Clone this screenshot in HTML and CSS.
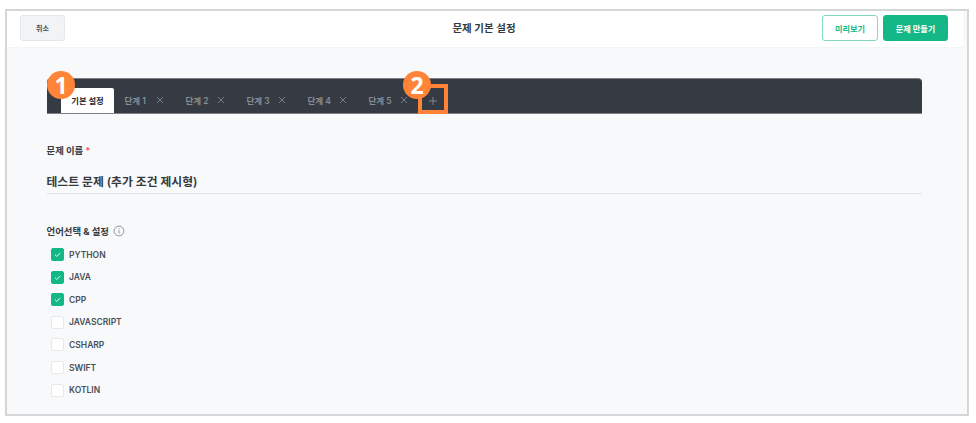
FILE: index.html
```
<!DOCTYPE html>
<html lang="ko">
<head>
    <meta charset="UTF-8">
    <meta name="viewport" content="width=device-width, initial-scale=1.0">
    <title>문제 기본 설정</title>
    <link rel="stylesheet" href="styles.css">
</head>
<body>

    <div class="frame">
        <header class="header">
            <div class="side"><button class="btn cancel">취소</button></div>
            <h1>문제 기본 설정</h1>
            <div class="side actions">
                <button class="btn preview">미리보기</button>
                <button class="btn create">문제 만들기</button>
            </div>
        </header>

        <main>
            <!-- Tabs -->
            <nav class="tabs">
                <div class="tab active">기본 설정<span class="marker">1</span></div>
                <div class="tab">단계 1<svg class="close" viewBox="0 0 8 8"><path d="M1 1l6 6M7 1l-6 6"/></svg></div>
                <div class="tab">단계 2<svg class="close" viewBox="0 0 8 8"><path d="M1 1l6 6M7 1l-6 6"/></svg></div>
                <div class="tab">단계 3<svg class="close" viewBox="0 0 8 8"><path d="M1 1l6 6M7 1l-6 6"/></svg></div>
                <div class="tab">단계 4<svg class="close" viewBox="0 0 8 8"><path d="M1 1l6 6M7 1l-6 6"/></svg></div>
                <div class="tab">단계 5<svg class="close" viewBox="0 0 8 8"><path d="M1 1l6 6M7 1l-6 6"/></svg></div>
                <div class="add">
                    <svg viewBox="0 0 8 8"><path d="M4 0v8M0 4h8"/></svg>
                    <span class="marker">2</span>
                </div>
            </nav>

            <!-- Problem name -->
            <section class="name">
                <h2>문제 이름<span class="required">*</span></h2>
                <div class="name-value">테스트 문제 (추가 조건 제시형)</div>
            </section>

            <!-- Languages -->
            <section class="languages">
                <h2>언어선택 &amp; 설정
                    <svg class="info" viewBox="0 0 12 12"><circle cx="6" cy="6" r="4.9"/><path d="M6 5.3v3.2M6 3.3v1"/></svg>
                </h2>
                <ul>
                    <li><span class="check on"><svg viewBox="0 0 12 12"><path d="M3.2 6.2l2 1.9 3.8-3.7"/></svg></span>PYTHON</li>
                    <li><span class="check on"><svg viewBox="0 0 12 12"><path d="M3.2 6.2l2 1.9 3.8-3.7"/></svg></span>JAVA</li>
                    <li><span class="check on"><svg viewBox="0 0 12 12"><path d="M3.2 6.2l2 1.9 3.8-3.7"/></svg></span>CPP</li>
                    <li><span class="check"></span>JAVASCRIPT</li>
                    <li><span class="check"></span>CSHARP</li>
                    <li><span class="check"></span>SWIFT</li>
                    <li><span class="check"></span>KOTLIN</li>
                </ul>
            </section>
        </main>
    </div>

</body>
</html>
```
FILE: styles.css
```
* {
    box-sizing: border-box;
}
body {
    margin: 0;
    padding: 9px 0 0 5px;
    background: #fff;
    color: #343a40;
    font-family: Inter, "Noto Sans CJK KR", sans-serif;
}
h1, h2, ul {
    margin: 0;
    padding: 0;
}
svg {
    display: block;
    fill: none;
    stroke: currentColor;
}
.frame {
    width: 964px;
    height: 407px;
    border: 2px solid #d5d6d8;
    background: #f8f9fb;
}
.header {
    display: flex;
    align-items: center;
    width: 956px;
    height: 37px;
    padding: 0 15px 2px 13px;
    background: #fff;
    border-bottom: 1px solid #f3f4f6;
}
.side {
    flex: 1;
    display: flex;
}
.actions {
    justify-content: flex-end;
    gap: 5px;
}
h1 {
    padding-top: 1px;
    font-size: 10.5px;
    font-weight: 600;
    line-height: 16px;
}
.btn {
    height: 26px;
    padding: 0 0 1px;
    border: 1px solid #14b886;
    border-radius: 3px;
    font-family: inherit;
    font-size: 8.2px;
    font-weight: bold;
}
.cancel {
    width: 45px;
    background: #f1f3f5;
    border-color: #e3e6ea;
    color: #495057;
    font-size: 7px;
}
.preview {
    width: 56px;
    background: #fff;
    border-color: #83d9bd;
    color: #14b886;
}
.create {
    width: 65px;
    background: #14b886;
    color: #fff;
}
main {
    padding: 30px 45px 0 39.5px;
}
.tabs {
    display: flex;
    align-items: flex-end;
    width: 875px;
    height: 36px;
    padding-left: 14.5px;
    background: #363a42;
    border: 1px solid #7d8085;
    border-width: 1px 0;
    border-radius: 4px 4px 0 0;
}
.tab {
    display: flex;
    align-items: center;
    justify-content: space-between;
    width: 61px;
    height: 25px;
    padding: 0 11px 1px 10.5px;
    color: #868e96;
    font-size: 8.5px;
    font-weight: 600;
}
.tab.active {
    position: relative;
    justify-content: center;
    width: 53px;
    padding: 0 0 1px;
    background: #fff;
    border-radius: 2px 2px 0 0;
    color: #212529;
    font-size: 8.3px;
    font-weight: bold;
}
.close {
    width: 8px;
    height: 8px;
    stroke-width: 0.8;
}
.add {
    position: relative;
    display: flex;
    align-items: center;
    justify-content: center;
    width: 30px;
    height: 30px;
    margin: 0 0 -1px -1px;
    padding-top: 3px;
    border: 4px solid #ff8438;
    color: #868e96;
}
.add svg {
    width: 8px;
    height: 8px;
    stroke-width: 0.9;
}
/* Numbered callouts */
.marker {
    position: absolute;
    top: -17px;
    left: -14px;
    width: 28px;
    height: 28px;
    border-radius: 50%;
    background: #ff8438;
    color: #fff;
    font: bold 23px/29px "Open Sans", sans-serif;
    text-align: center;
}
.add .marker {
    top: -17px;
    left: -19px;
}
h2 {
    display: flex;
    align-items: center;
    height: 16px;
    font-size: 9.4px;
    font-weight: bold;
}
.name {
    padding-top: 28px;
}
.required {
    margin-left: 2px;
    color: #ff5c5c;
}
.name-value {
    width: 875px;
    height: 36px;
    padding-top: 15px;
    border-bottom: 1px solid #dfe2e6;
    font-size: 11.8px;
    font-weight: 600;
    line-height: 18px;
}
.languages {
    padding-top: 29px;
}
.info {
    width: 12px;
    height: 12px;
    margin-left: 4px;
    color: #868e96;
    stroke-width: 0.9;
}
ul {
    padding: 4px 0 0 4.5px;
    list-style: none;
}
li {
    display: flex;
    align-items: center;
    gap: 5px;
    height: 22.55px;
    padding-top: 1px;
    color: #495057;
    font-size: 8.5px;
    font-weight: 600;
}
.check {
    width: 13px;
    height: 13px;
    background: #fff;
    border: 1px solid #e6e9ec;
    border-radius: 2px;
}
.check.on {
    background: #14b886;
    border-color: #14b886;
    color: #fff;
}
.check svg {
    width: 11px;
    height: 11px;
}
```
